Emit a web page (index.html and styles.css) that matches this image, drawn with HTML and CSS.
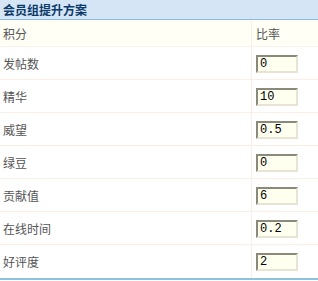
FILE: index.html
```html
<!DOCTYPE html>
<html lang="zh-CN">
<head>
    <meta charset="UTF-8">
    <meta name="viewport" content="width=device-width, initial-scale=1.0">
    <title>会员组提升方案</title>
    <link rel="stylesheet" href="styles.css">
</head>
<body>
    <div class="box">
        <h3 class="box-title">会员组提升方案</h3>
        <table class="rules">
            <thead>
                <tr>
                    <th class="col-name">积分</th>
                    <th class="col-rate">比率</th>
                </tr>
            </thead>
            <tbody>
                <tr><td class="col-name">发帖数</td><td class="col-rate"><input type="text" class="rate" value="0"></td></tr>
                <tr><td class="col-name">精华</td><td class="col-rate"><input type="text" class="rate" value="10"></td></tr>
                <tr><td class="col-name">威望</td><td class="col-rate"><input type="text" class="rate" value="0.5"></td></tr>
                <tr><td class="col-name">绿豆</td><td class="col-rate"><input type="text" class="rate" value="0"></td></tr>
                <tr><td class="col-name">贡献值</td><td class="col-rate"><input type="text" class="rate" value="6"></td></tr>
                <tr><td class="col-name">在线时间</td><td class="col-rate"><input type="text" class="rate" value="0.2"></td></tr>
                <tr><td class="col-name">好评度</td><td class="col-rate"><input type="text" class="rate" value="2"></td></tr>
            </tbody>
        </table>
    </div>
</body>
</html>
```

FILE: styles.css
```css
body {
    margin: 0;
    background: #fff;
    font-family: "Noto Sans CJK SC", "Liberation Sans", sans-serif;
    font-size: 12px;
    color: #555;
}
.box {
    width: 318px;
    border-bottom: 2px solid #8cc4e0;
}
.box-title {
    margin: 0;
    height: 19px;
    line-height: 19px;
    padding-left: 3px;
    background: #d5e5f5;
    border-bottom: 1px solid #86bde0;
    color: #0b3a6b;
    font-size: 12px;
    font-weight: bold;
}
.rules {
    width: 100%;
    border-collapse: collapse;
}
.rules th {
    height: 26px;
    background: #fffff5;
    font-weight: normal;
    text-align: left;
    border-bottom: 1px solid #fbf1e8;
}
.rules td {
    height: 32px;
    border-bottom: 1px solid #fdeee4;
}
.rules tr:last-child td {
    border-bottom: none;
    height: 33px;
}
.col-name {
    width: 248px;
    padding: 0 0 0 3px;
    border-right: 1px solid #fbeee6;
}
.col-rate {
    padding: 0 0 0 4px;
}
.rate {
    box-sizing: border-box;
    width: 42px;
    height: 18px;
    margin: 0;
    padding: 1px 2px;
    background: #fffff0;
    border: 2px solid;
    border-color: #8a8a7a #e8e4d4 #e8e4d4 #8a8a7a;
    font-family: "Liberation Mono", monospace;
    font-size: 12px;
    color: #000;
    vertical-align: middle;
}
```
